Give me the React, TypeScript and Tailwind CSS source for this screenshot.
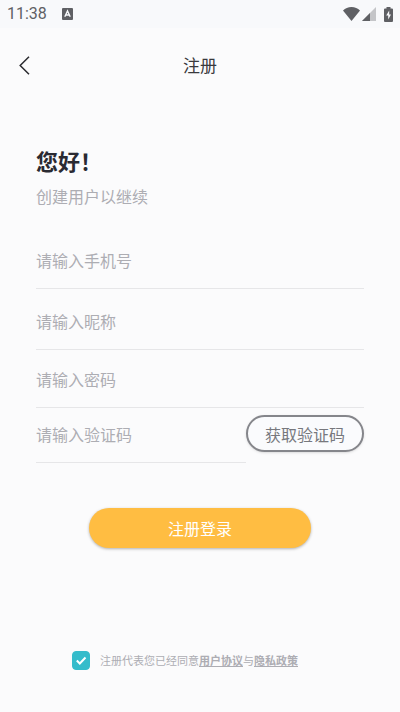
import { useState } from "react";
import type { InputHTMLAttributes } from "react";

const fieldStyle =
  "h-12 min-w-0 rounded-none border-b border-[#e6e6e8] bg-transparent pb-2.5 text-base text-[#55555c] outline-none placeholder:text-[#adadb3]";

type FieldProps = InputHTMLAttributes<HTMLInputElement> & { label: string };

const Field = ({ label, className, ...props }: FieldProps) => (
  <input
    aria-label={label}
    placeholder={label}
    className={`${fieldStyle} ${className ?? ""}`}
    {...props}
  />
);

const StatusBar = () => (
  <div className="flex h-7 items-center justify-between bg-[#f8f9fb] px-[7px] text-[#5f6064]">
    <div className="flex items-center gap-[15px]">
      <span className="font-[Roboto,sans-serif] text-base leading-5">11:38</span>
      <svg width="11" height="12" viewBox="0 0 11 12">
        <rect width="11" height="12" rx="1" fill="currentColor" />
        <path
          d="M2.8 8.8 5.5 3l2.7 5.8M3.8 7h3.4"
          fill="none"
          stroke="#f8f9fb"
          strokeWidth="1.4"
        />
      </svg>
    </div>
    <div className="flex items-center">
      <svg width="17" height="14" viewBox="0 0 17 14" fill="currentColor">
        <path d="M8.5 14 0 3.4C2.2 1.3 5.2 0 8.5 0S14.8 1.3 17 3.4Z" />
      </svg>
      <svg className="ml-0.5" width="14" height="14" viewBox="0 0 14 14">
        <path d="M14 0v14H0Z" fill="#c4c5c8" />
        <path d="M8 6v8H0Z" fill="currentColor" />
      </svg>
      <svg className="ml-2" width="9" height="15" viewBox="0 0 9 15">
        <path
          d="M2.5 0h4v1.5H8q1 0 1 1V14q0 1-1 1H1q-1 0-1-1V2.5q0-1 1-1h1.5Z"
          fill="currentColor"
        />
        <path d="M5.2 3.5 2.2 8.500h2v4l2.800-5h-1.800Z" fill="#f8f9fb" />
      </svg>
    </div>
  </div>
);

const App = () => {
  const [agreed, setAgreed] = useState(true);

  return (
    <div className="min-h-screen bg-[#fbfbfc] font-['Noto_Sans_CJK_SC',sans-serif]">
      <StatusBar />

      <header className="grid h-[74px] grid-cols-[48px_1fr_48px] items-center">
        <button type="button" aria-label="返回" className="flex h-12 items-center pl-[19px]">
          <svg width="11" height="19" viewBox="0 0 11 19" fill="none">
            <path d="M10 .8 1.2 9.5 10 18.2" stroke="#2b2b2f" strokeWidth="1.5" />
          </svg>
        </button>
        <h1 className="text-center text-[17px] leading-6 text-[#39393d]">注册</h1>
      </header>

      <main className="px-9 pt-11">
        <h2 className="text-[22px] leading-7 font-bold text-[#2a2a32]">您好！</h2>
        <p className="mt-2.5 text-base leading-6 text-[#adadb3]">创建用户以继续</p>

        <form className="mt-[33px] flex flex-col" onSubmit={(e) => e.preventDefault()}>
          <Field label="请输入手机号" type="tel" />
          <Field label="请输入昵称" type="text" className="mt-[13px]" />
          <Field label="请输入密码" type="password" className="mt-2.5" />
          <div className="mt-[7px] flex items-start">
            <Field label="请输入验证码" type="text" className="flex-1" />
            <button
              type="button"
              className="h-[37px] w-[118px] rounded-full border-2 border-[#85868b] bg-[#fafbfd] text-base leading-6 text-[#77787d] shadow-sm"
            >
              获取验证码
            </button>
          </div>

          <button
            type="submit"
            className="mt-[45px] h-10 w-[222px] self-center rounded-full bg-[#ffbd42] text-base leading-6 text-white shadow-[0_1px_3px_rgba(0,0,0,0.3)]"
          >
            注册登录
          </button>

          <div className="mt-[102px] flex items-center pb-8 pl-9 text-[11px] leading-5 text-[#adadb3]">
            <span className="relative flex">
              <input
                id="agree"
                type="checkbox"
                checked={agreed}
                onChange={(e) => setAgreed(e.target.checked)}
                className="h-[19px] w-[18px] appearance-none rounded border border-[#35bccb] checked:bg-[#35bccb]"
              />
              {agreed && (
                <svg
                  className="pointer-events-none absolute inset-0"
                  width="18"
                  height="19"
                  viewBox="0 0 18 19"
                  fill="none"
                >
                  <path d="m4.8 9.5 3 3 5.700-6" stroke="white" strokeWidth="2" />
                </svg>
              )}
            </span>
            <label htmlFor="agree" className="ml-2.5 whitespace-nowrap">
              注册代表您已经同意
              <a href="#terms" className="font-bold underline">用户协议</a>
              与
              <a href="#privacy" className="font-bold underline">隐私政策</a>
            </label>
          </div>
        </form>
      </main>
    </div>
  );
};

export default App;
